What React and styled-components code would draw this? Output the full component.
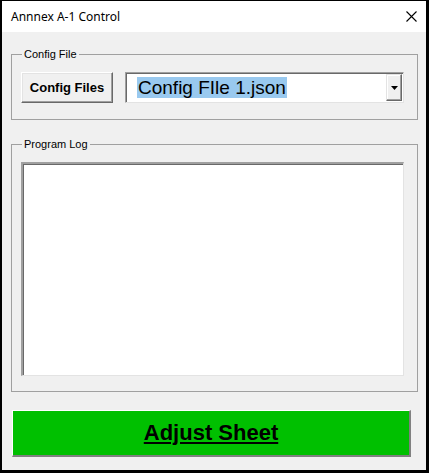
import React from 'react';
import styled, { createGlobalStyle } from 'styled-components';

const GlobalStyle = createGlobalStyle`
  html, body {
    margin: 0;
    padding: 0;
    background: #000;
  }
  * {
    box-sizing: border-box;
  }
`;

const Frame = styled.div`
  width: 429px;
  height: 473px;
  background: #f0f0f0;
  border-style: solid;
  border-color: #000;
  border-width: 1px 3px 3px 2px;
  display: flex;
  flex-direction: column;
`;

const TitleBar = styled.div`
  height: 31px;
  flex: none;
  background: #fff;
  display: flex;
  align-items: center;
  justify-content: space-between;
  padding: 0 9px 0 9px;
  font-family: "Noto Sans", "Open Sans", sans-serif;
  font-size: 12px;
  color: #000;
`;

const Body = styled.div`
  flex: 1;
  display: flex;
  flex-direction: column;
  padding: 22px 8px 0 9px;
`;

const Group = styled.div`
  position: relative;
  border: 1px solid #a0a0a0;
  height: ${p => p.$height}px;
  margin-bottom: ${p => p.$gap}px;
  padding: 17px 13px 0 9px;
  display: flex;
  align-items: flex-start;
  gap: 12px;
`;

const GroupLabel = styled.span`
  position: absolute;
  top: -7px;
  left: 10px;
  padding: 0 2px;
  background: #f0f0f0;
  font-family: "Liberation Sans", Arial, sans-serif;
  font-size: 11px;
  line-height: 13px;
  color: #000;
`;

const RaisedButton = styled.button`
  width: 92px;
  height: 31px;
  flex: none;
  margin: 0;
  padding: 0;
  background: #f0f0f0;
  border-style: solid;
  border-width: 1px;
  border-color: #fff #696969 #696969 #fff;
  box-shadow: inset -1px -1px 0 #a0a0a0, inset 1px 1px 0 #e3e3e3;
  font-family: "Liberation Sans", Arial, sans-serif;
  font-weight: bold;
  font-size: 13px;
  color: #000;
`;

const Combo = styled.div`
  width: 279px;
  height: 31px;
  flex: none;
  display: flex;
  align-items: center;
  background: #fff;
  border-style: solid;
  border-width: 1px;
  border-color: #a0a0a0 #e3e3e3 #e3e3e3 #a0a0a0;
  box-shadow: inset 1px 1px 0 #696969;
  padding: 1px 1px 1px 11px;
`;

const ComboText = styled.span`
  flex: 1;
  font-family: "Liberation Sans", Arial, sans-serif;
  font-size: 19px;
  line-height: 21px;
  color: #000;
`;

const Selected = styled.span`
  background: #99c9ef;
  padding: 0 1px;
`;

const DropButton = styled.div`
  width: 16px;
  flex: none;
  align-self: stretch;
  display: flex;
  align-items: center;
  justify-content: center;
  background: #f0f0f0;
  border-style: solid;
  border-width: 1px;
  border-color: #e3e3e3 #696969 #696969 #e3e3e3;
  box-shadow: inset -1px -1px 0 #a0a0a0, inset 1px 1px 0 #fff;
`;

const LogBox = styled.div`
  flex: 1;
  height: 214px;
  background: #fff;
  border-style: solid;
  border-width: 2px 1px 1px 2px;
  border-color: #a0a0a0 #e3e3e3 #e3e3e3 #a0a0a0;
  box-shadow: inset 1px 1px 0 #696969;
`;

const GoButton = styled.button`
  width: 399px;
  height: 47px;
  margin: 0 0 0 1px;
  padding: 0;
  background: #00c000;
  border-style: solid;
  border-width: 1px 2px 2px 1px;
  border-color: #fff #808080 #808080 #fff;
  font-family: "Liberation Sans", Arial, sans-serif;
  font-weight: bold;
  font-size: 22px;
  text-decoration: underline;
  text-underline-offset: 2px;
  text-decoration-thickness: 2px;
  color: #000;
`;

function CloseIcon() {
  return (
    <svg width="11" height="11" viewBox="0 0 11 11">
      <path d="M0.5 0.5 L10.5 10.5 M10.5 0.5 L0.5 10.5" stroke="#000" strokeWidth="1.1" fill="none" />
    </svg>
  );
}

function Arrow() {
  return (
    <svg width="7" height="4" viewBox="0 0 7 4">
      <path d="M0 0 H7 L3.5 4 Z" fill="#000" />
    </svg>
  );
}

export default function App() {
  return (
    <>
      <GlobalStyle />
      <Frame>
        <TitleBar>
          <span>Annnex A-1 Control</span>
          <CloseIcon />
        </TitleBar>
        <Body>
          <Group $height={66} $gap={24}>
            <GroupLabel>Config File</GroupLabel>
            <RaisedButton>Config Files</RaisedButton>
            <Combo>
              <ComboText><Selected>Config FIle 1.json</Selected></ComboText>
              <DropButton><Arrow /></DropButton>
            </Combo>
          </Group>
          <Group $height={248} $gap={18}>
            <GroupLabel>Program Log</GroupLabel>
            <LogBox />
          </Group>
          <GoButton>Adjust Sheet</GoButton>
        </Body>
      </Frame>
    </>
  );
}
